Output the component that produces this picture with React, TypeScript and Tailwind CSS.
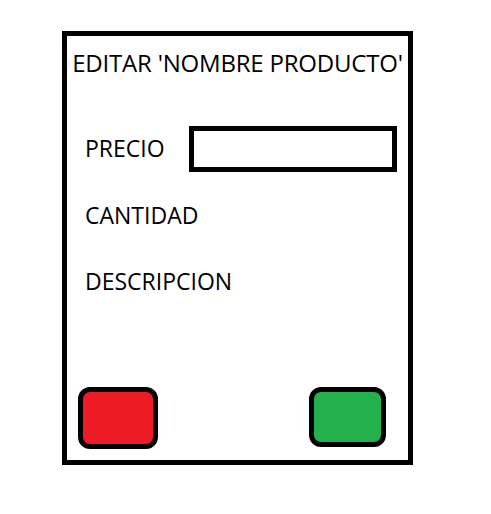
function App() {
  return (
    <div className="min-h-screen w-full bg-white pl-[62px] pt-[31px] font-['Open_Sans',sans-serif] text-black">
      {/* frame */}
      <div className="flex h-[434px] w-[351px] flex-col border-[5px] border-black">
        <p className="mt-[11px] whitespace-nowrap text-center text-[24px] leading-[31px] tracking-[-0.2px]">
          EDITAR 'NOMBRE PRODUCTO'
        </p>
        <div className="mt-[48px] flex flex-row items-center pl-[18px]">
          <p className="-mt-[1px] w-[104px] text-[23px] leading-[31px]">PRECIO</p>
          <input
            type="text"
            className="h-[46px] w-[208px] border-[5px] border-black bg-white outline-none"
          />
        </div>
        <p className="mt-[28px] pl-[18px] text-[23px] leading-[31px]">CANTIDAD</p>
        <p className="mt-[35px] pl-[18px] text-[23px] leading-[31px]">DESCRIPCION</p>
        <div className="mt-auto mb-[11px] flex flex-row items-start justify-between pl-[11px] pr-[22px]">
          <button className="h-[62px] w-[80px] rounded-[12px] border-[5px] border-black bg-[#ED1C24]"></button>
          <button className="h-[60px] w-[77px] rounded-[12px] border-[5px] border-black bg-[#22B14C]"></button>
        </div>
      </div>
    </div>
  );
}

export default App;
